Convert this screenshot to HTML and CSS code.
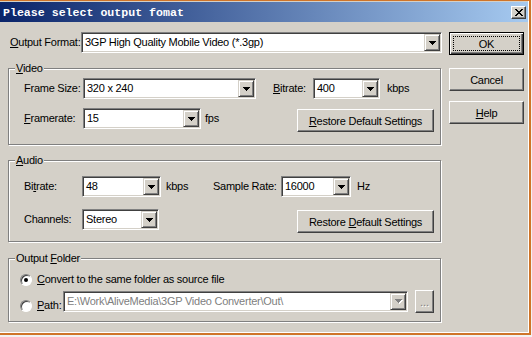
FILE: index.html
```html
<!DOCTYPE html>
<html>
<head>
<meta charset="utf-8">
<link rel="stylesheet" href="styles.css">
</head>
<body>
<div class="window">
  <div class="frame">
    <div class="titlebar">
      <span class="title">Please select output fomat</span>
      <span class="close"><svg width="8" height="7" viewBox="0 0 8 7"><path d="M0 0h2v1H0zM6 0h2v1H6zM1 1h2v1H1zM5 1h2v1H5zM2 2h4v1H2zM3 3h2v1H3zM2 4h4v1H2zM1 5h2v1H1zM5 5h2v1H5zM0 6h2v1H0zM6 6h2v1H6z" fill="#000"/></svg></span>
    </div>
    <div class="client">
      <div class="main">
        <div class="row">
          <span class="lbl lw73"><u>O</u>utput Format:</span>
          <div class="combo cw361"><span class="val">3GP High Quality Mobile Video (*.3gp)</span><span class="drop"><svg width="7" height="4" viewBox="0 0 7 4"><path d="M0 0h7v1H0zM1 1h5v1H1zM2 2h3v1H2zM3 3h1v1H3z" fill="#000"/></svg></span></div>
        </div>

        <div class="group g-video">
          <div class="legend lg15"><u>V</u>ideo</div>
          <div class="row mt3">
            <span class="lbl lw59">Frame Size:</span>
            <div class="combo cw173"><span class="val">320 x 240</span><span class="drop"><svg width="7" height="4" viewBox="0 0 7 4"><path d="M0 0h7v1H0zM1 1h5v1H1zM2 2h3v1H2zM3 3h1v1H3z" fill="#000"/></svg></span></div>
            <span class="lbl lw40 ml17"><u>B</u>itrate:</span>
            <div class="combo cw67"><span class="val">400</span><span class="drop"><svg width="7" height="4" viewBox="0 0 7 4"><path d="M0 0h7v1H0zM1 1h5v1H1zM2 2h3v1H2zM3 3h1v1H3z" fill="#000"/></svg></span></div>
            <span class="lbl ml7">kbps</span>
          </div>
          <div class="row mt9">
            <span class="lbl lw59"><u>F</u>ramerate:</span>
            <div class="combo cw118"><span class="val">15</span><span class="drop"><svg width="7" height="4" viewBox="0 0 7 4"><path d="M0 0h7v1H0zM1 1h5v1H1zM2 2h3v1H2zM3 3h1v1H3z" fill="#000"/></svg></span></div>
            <span class="lbl ml4">fps</span>
            <button class="btn restore"><span><u>R</u>estore Default Settings</span></button>
          </div>
        </div>

        <div class="group g-audio">
          <div class="legend lg15"><u>A</u>udio</div>
          <div class="row mt9">
            <span class="lbl lw58">Bi<u>t</u>rate:</span>
            <div class="combo cw79"><span class="val">48</span><span class="drop"><svg width="7" height="4" viewBox="0 0 7 4"><path d="M0 0h7v1H0zM1 1h5v1H1zM2 2h3v1H2zM3 3h1v1H3z" fill="#000"/></svg></span></div>
            <span class="lbl lw47 ml5">kbps</span>
            <span class="lbl lw68">Sample Rate:</span>
            <div class="combo cw70"><span class="val">16000</span><span class="drop"><svg width="7" height="4" viewBox="0 0 7 4"><path d="M0 0h7v1H0zM1 1h5v1H1zM2 2h3v1H2zM3 3h1v1H3z" fill="#000"/></svg></span></div>
            <span class="lbl ml6">Hz</span>
          </div>
          <div class="row mt12">
            <span class="lbl lw58">Channels:</span>
            <div class="combo cw77"><span class="val">Stereo</span><span class="drop"><svg width="7" height="4" viewBox="0 0 7 4"><path d="M0 0h7v1H0zM1 1h5v1H1zM2 2h3v1H2zM3 3h1v1H3z" fill="#000"/></svg></span></div>
            <button class="btn restore"><span>Restore <u>D</u>efault Settings</span></button>
          </div>
        </div>

        <div class="group g-folder">
          <div class="legend lg11">Output <u>F</u>older</div>
          <div class="opt mt8">
            <span class="radio on"></span>
            <span class="optlbl"><u>C</u>onvert to the same folder as source file</span>
          </div>
          <div class="row mt4">
            <div class="opt mt9">
              <span class="radio"></span>
              <span class="optlbl lw26"><u>P</u>ath:</span>
            </div>
            <div class="combo cw345 disabled mt1"><span class="val">E:\Work\AliveMedia\3GP Video Converter\Out\</span><span class="drop"><svg width="8" height="5" viewBox="0 0 8 5"><path d="M1 1h7v1H1zM2 2h5v1H2zM3 3h3v1H3zM4 4h1v1H4z" fill="#fff"/><path d="M0 0h7v1H0zM1 1h5v1H1zM2 2h3v1H2zM3 3h1v1H3z" fill="#808080"/></svg></span></div>
            <button class="btn dots"><span>...</span></button>
          </div>
        </div>
      </div>

      <div class="side">
        <button class="btn default"><span class="focus">OK</span></button>
        <button class="btn mt13"><span>Cancel</span></button>
        <button class="btn mt10"><span><u>H</u>elp</span></button>
      </div>
    </div>
  </div>
</div>
</body>
</html>
```

FILE: styles.css
```css
body {
  margin: 0;
  background: #f2f2f2;
  font-family: "Liberation Sans", Arial, sans-serif;
  font-size: 11px;
  letter-spacing: -0.25px;
  color: #000;
}

.window {
  width: 531px;
  height: 335px;
  box-sizing: border-box;
  border-top: 1px solid #cf7428;
  border-right: 2px solid #cf7428;
  border-bottom: 2px solid #cf7428;
  background: #d4d0c8;
}

.frame {
  height: 100%;
  box-sizing: border-box;
  border-right: 1px solid #fff;
  border-bottom: 1px solid #fff;
  padding-top: 1px;
  display: flex;
  flex-direction: column;
}

.titlebar {
  height: 20px;
  display: flex;
  align-items: center;
  justify-content: space-between;
  padding: 0 2px 0 3px;
  background: linear-gradient(to right, #0a246a, #a6caf0);
}

.title {
  font-family: "Liberation Mono", monospace;
  font-weight: bold;
  font-size: 11.6px;
  letter-spacing: 0;
  color: #fff;
}

.close {
  width: 15px;
  height: 13px;
  box-sizing: border-box;
  background: #d4d0c8;
  border: 1px solid;
  border-color: #fff #404040 #404040 #fff;
  box-shadow: inset -1px -1px #808080;
  display: flex;
  align-items: center;
  justify-content: center;
}

.client {
  display: flex;
  padding: 10px 0 0 8px;
}

.main {
  width: 434px;
  display: flex;
  flex-direction: column;
}

.side {
  width: 75px;
  margin-left: 7px;
  display: flex;
  flex-direction: column;
}

.row {
  display: flex;
  align-items: flex-start;
}

.lbl {
  height: 21px;
  line-height: 21px;
  white-space: nowrap;
  flex: none;
}

.lw73 { width: 73px; padding-left: 2px; box-sizing: border-box; }
.lw59 { width: 59px; }
.lw58 { width: 58px; }
.lw40 { width: 40px; }
.lw47 { width: 47px; }
.lw68 { width: 68px; }
.lw26 { width: 26px; }

.ml4 { margin-left: 4px; }
.ml5 { margin-left: 5px; }
.ml6 { margin-left: 6px; }
.ml7 { margin-left: 7px; }
.ml17 { margin-left: 17px; }

.mt1 { margin-top: 1px; }
.mt3 { margin-top: 3px; }
.mt4 { margin-top: 4px; }
.mt8 { margin-top: 8px; }
.mt9 { margin-top: 9px; }
.mt10 { margin-top: 10px; }
.mt12 { margin-top: 12px; }
.mt13 { margin-top: 13px; }

/* combobox */
.combo {
  display: flex;
  flex: none;
  height: 21px;
  box-sizing: border-box;
  background: #fff;
  border: 1px solid;
  border-color: #808080 #fff #fff #808080;
  box-shadow: inset 1px 1px #404040, inset -1px -1px #d4d0c8;
  padding: 1px;
}

.cw361 { width: 361px; }
.cw173 { width: 173px; }
.cw67 { width: 67px; }
.cw118 { width: 118px; }
.cw79 { width: 79px; }
.cw70 { width: 70px; }
.cw77 { width: 77px; }
.cw345 { width: 345px; }

.val {
  flex: 1;
  min-width: 0;
  overflow: hidden;
  white-space: nowrap;
  padding-left: 2px;
  line-height: 17px;
}

.drop {
  flex: none;
  width: 16px;
  height: 17px;
  box-sizing: border-box;
  background: #d4d0c8;
  border: 1px solid;
  border-color: #d4d0c8 #404040 #404040 #d4d0c8;
  box-shadow: inset 1px 1px #fff, inset -1px -1px #808080;
  display: flex;
  align-items: center;
  justify-content: center;
}

.drop svg { display: block; margin-left: 1px; }

.disabled .val { color: #808080; }

/* group box */
.group {
  box-sizing: border-box;
  width: 433px;
  border: 1px solid #808080;
  box-shadow: inset 1px 1px #fff, 1px 1px #fff;
  display: flex;
  flex-direction: column;
  padding-right: 6px;
}

.g-video { height: 77px; margin-top: 15px; padding-left: 15px; }
.g-audio { height: 82px; margin-top: 15px; padding-left: 15px; }
.g-folder { height: 64px; margin-top: 16px; padding-left: 11px; }

.legend {
  align-self: flex-start;
  height: 13px;
  line-height: 13px;
  margin-top: -7px;
  padding: 0 1px;
  background: #d4d0c8;
  white-space: nowrap;
}

.lg15 { margin-left: -9px; }
.lg11 { margin-left: -5px; }

/* buttons */
.btn {
  height: 23px;
  box-sizing: border-box;
  padding: 0;
  margin-left: 0;
  margin-right: 0;
  background: #d4d0c8;
  border: 1px solid;
  border-color: #fff #404040 #404040 #fff;
  box-shadow: inset -1px -1px #808080;
  font: inherit;
  letter-spacing: inherit;
  color: #000;
  display: flex;
  align-items: center;
  justify-content: center;
  flex: none;
  white-space: nowrap;
}

.restore {
  width: 137px;
  margin-left: auto;
  margin-top: 1px;
}

.dots {
  width: 19px;
  margin-left: 7px;
  color: #808080;
  text-shadow: 1px 1px #fff;
  letter-spacing: 0;
}

.side .btn { width: 75px; }

.btn.default {
  border: 1px solid #000;
  box-shadow: inset 1px 1px #fff, inset -1px -1px #404040, inset -2px -2px #808080;
  padding: 3px;
  align-items: stretch;
}

.focus {
  flex: 1;
  border: 1px dotted #000;
  display: flex;
  align-items: center;
  justify-content: center;
}

/* radio options */
.opt {
  display: flex;
  align-items: center;
  height: 13px;
  flex: none;
}

.radio {
  width: 12px;
  height: 12px;
  box-sizing: border-box;
  border-radius: 50%;
  background: #fff;
  border: 1px solid;
  border-color: #808080 #fff #fff #808080;
  box-shadow: inset 1px 1px #404040;
  margin-right: 5px;
  display: flex;
  align-items: center;
  justify-content: center;
  flex: none;
}

.radio.on::after {
  content: "";
  width: 4px;
  height: 4px;
  border-radius: 50%;
  background: #000;
}

.optlbl {
  white-space: nowrap;
  line-height: 13px;
}
```
